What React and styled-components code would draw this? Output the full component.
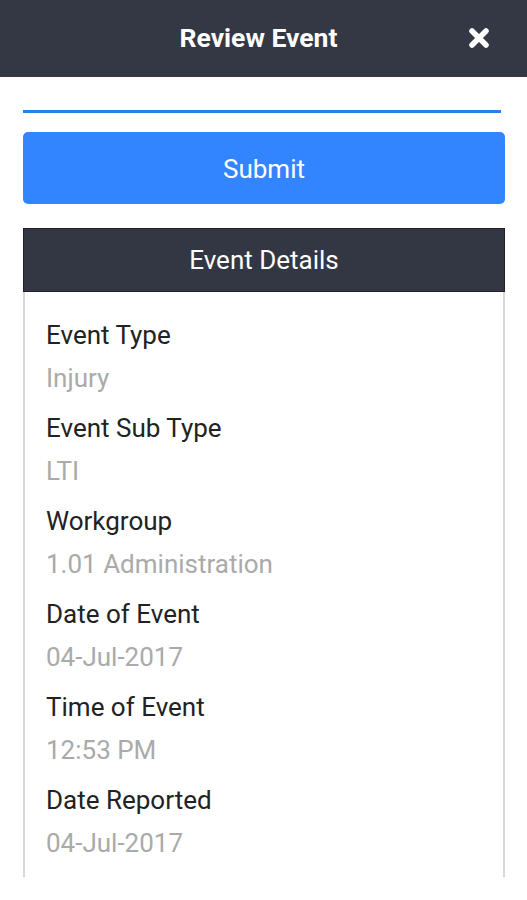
import React from 'react';
import styled, { createGlobalStyle } from 'styled-components';

const details = [
  { label: 'Event Type', value: 'Injury' },
  { label: 'Event Sub Type', value: 'LTI' },
  { label: 'Workgroup', value: '1.01 Administration' },
  { label: 'Date of Event', value: '04-Jul-2017' },
  { label: 'Time of Event', value: '12:53 PM' },
  { label: 'Date Reported', value: '04-Jul-2017' },
];

function CloseIcon() {
  return (
    <svg width="22" height="22" viewBox="0 0 22 22">
      <path d="M4 4 L18 18 M18 4 L4 18" stroke="#fff" strokeWidth="5.5" strokeLinecap="round" />
    </svg>
  );
}

export default function App() {
  return (
    <>
      <GlobalStyle />
      <Page>
        <Header>
          <Title>Review Event</Title>
          <CloseButton><CloseIcon /></CloseButton>
        </Header>
        <Content>
          <Progress />
          <SubmitBtn>Submit</SubmitBtn>
          <Card>
            <CardHeader>Event Details</CardHeader>
            <CardBody>
              {details.map((d) => (
                <Field key={d.label}>
                  <Label>{d.label}</Label>
                  <Value>{d.value}</Value>
                </Field>
              ))}
            </CardBody>
          </Card>
        </Content>
      </Page>
    </>
  );
}

const GlobalStyle = createGlobalStyle`
  body {
    margin: 0;
    background: #fff;
    font-family: Roboto, "Liberation Sans", sans-serif;
  }
`;

const Page = styled.div`
  width: 527px;
  height: 900px;
  overflow: hidden;
  background: #fff;
`;

const Header = styled.div`
  height: 77px;
  background: #343844;
  display: flex;
  align-items: center;
  justify-content: center;
  position: relative;
  padding-right: 10px;
  box-sizing: border-box;
`;

const Title = styled.h1`
  margin: 0;
  margin-top: -2px;
  color: #fff;
  font-size: 26.5px;
  font-weight: 700;
`;

const CloseButton = styled.div`
  position: absolute;
  right: 37px;
  top: 27px;
  width: 22px;
  height: 22px;
  display: flex;
`;

const Content = styled.div`
  padding: 33px 22px 0 23px;
  display: flex;
  flex-direction: column;
`;

const Progress = styled.div`
  height: 3px;
  background: #2b7de9;
  margin-right: 4px;
`;

const SubmitBtn = styled.button`
  margin-top: 19px;
  height: 72px;
  border: none;
  border-radius: 5px;
  background: #3385ff;
  color: #fff;
  font-family: Roboto, "Liberation Sans", sans-serif;
  font-size: 26px;
  padding: 0 0 0 0;
  padding-top: 2px;
`;

const Card = styled.div`
  margin-top: 24px;
  display: flex;
  flex-direction: column;
`;

const CardHeader = styled.div`
  height: 64px;
  background: #333743;
  border: 1px solid #1e2028;
  box-sizing: border-box;
  color: #fff;
  font-size: 26px;
  display: flex;
  align-items: center;
  justify-content: center;
`;

const CardBody = styled.div`
  border-left: 2px solid #d6d6d6;
  border-right: 2px solid #d6d6d6;
  padding: 28px 21px 20px;
  height: 585px;
  box-sizing: border-box;
  display: flex;
  flex-direction: column;
  gap: 19px;
`;

const Field = styled.div`
  display: flex;
  flex-direction: column;
  gap: 12px;
`;

const Label = styled.div`
  color: #222;
  font-size: 26px;
  line-height: 31px;
`;

const Value = styled.div`
  color: #aaa;
  font-size: 26px;
  line-height: 31px;
`;
